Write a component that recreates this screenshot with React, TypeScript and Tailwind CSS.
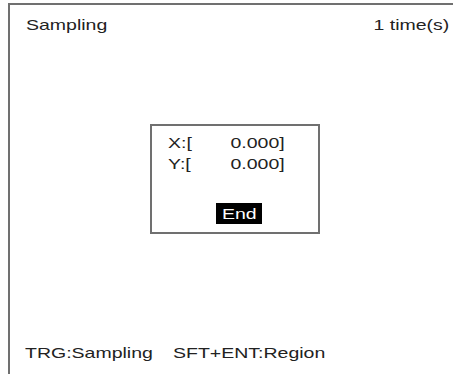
import React from "react";

export default function App() {
  const font = { fontFamily: '"Liberation Sans", Arial, sans-serif' };
  const L = "inline-block scale-x-[1.3] origin-left whitespace-pre";
  const R = "inline-block scale-x-[1.3] origin-right whitespace-pre";
  return (
    <div
      className="w-[453px] h-[374px] bg-white overflow-hidden pt-[3px] pl-[8px] text-[#222]"
      style={font}
    >
      <div className="h-[371px] border-l-2 border-t-2 border-[#707070] flex flex-col">
        <div className="flex justify-between pt-[10px] pl-[16px] pr-[4px] text-[15px] leading-[19px]">
          <span className={L}>Sampling</span>
          <span className={R}>1 time(s)</span>
        </div>
        <div className="mt-[90px] ml-[140px] w-[170px] h-[110px] border-2 border-[#707070] flex flex-col pt-[6px] pl-[16px]">
          <div className="w-[117px] flex justify-between text-[15px] leading-[21px]">
            <span className={L}>X:[</span>
            <span className={R}>0.000]</span>
          </div>
          <div className="w-[117px] flex justify-between text-[15px] leading-[21px]">
            <span className={L}>Y:[</span>
            <span className={R}>0.000]</span>
          </div>
          <div className="mt-[29px] ml-[48px] w-[46px] h-[21px] bg-black text-white flex items-center justify-center text-[15px] leading-[19px]">
            <span className="inline-block scale-x-[1.3] origin-center">End</span>
          </div>
        </div>
        <div className="mt-[109px] pl-[15px] text-[15px] leading-[19px] flex">
          <span className="w-[148px] shrink-0">
            <span className={L}>TRG:Sampling</span>
          </span>
          <span className={L}>SFT+ENT:Region</span>
        </div>
      </div>
    </div>
  );
}
